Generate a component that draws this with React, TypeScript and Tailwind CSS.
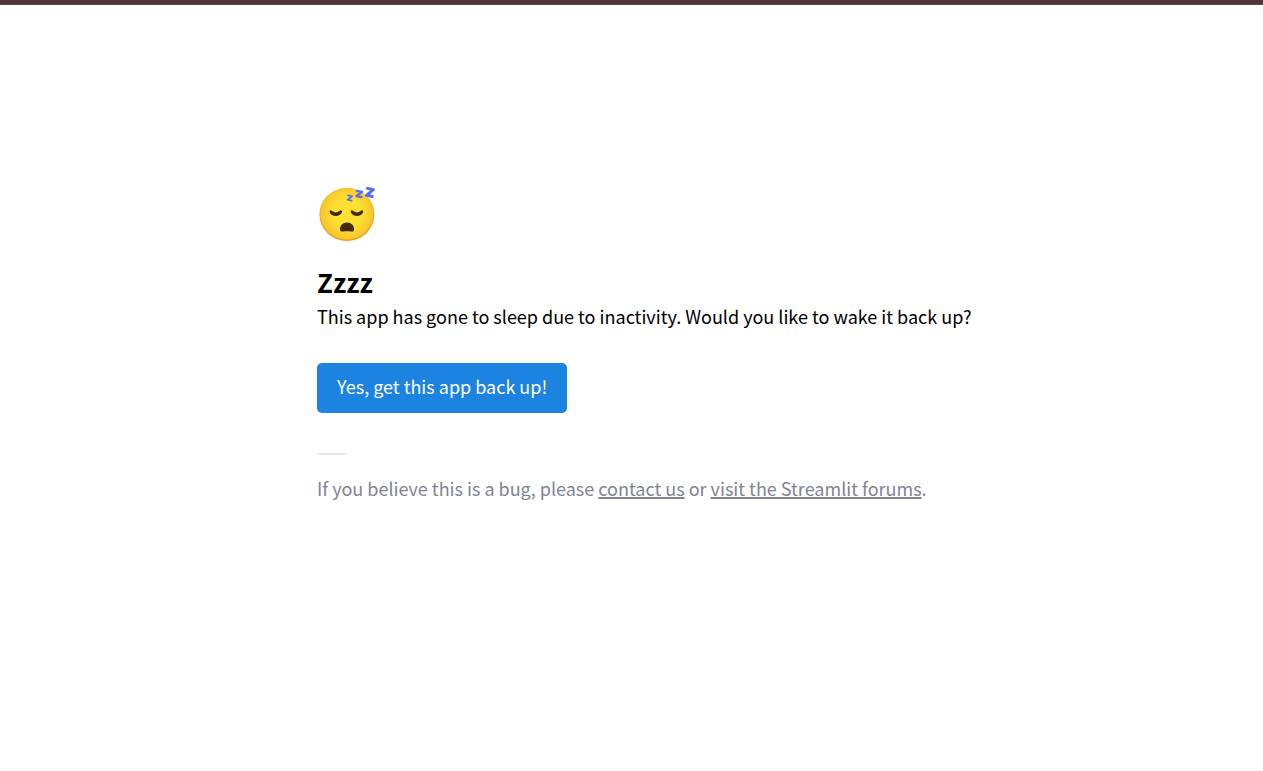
function SleepingFace() {
  return (
    <svg viewBox="0 0 60 60" className="size-15" role="img" aria-label="Sleeping face">
      <defs>
        <radialGradient id="face" cx="30" cy="29" r="28" gradientUnits="userSpaceOnUse">
          <stop offset="0.5" stopColor="#fde030" />
          <stop offset="0.92" stopColor="#f9c62c" />
          <stop offset="1" stopColor="#f4a223" />
        </radialGradient>
      </defs>
      <ellipse cx="29.9" cy="30.5" rx="27.4" ry="26.6" fill="#f09c1a" />
      <ellipse cx="29.7" cy="29.9" rx="26.9" ry="25.9" fill="url(#face)" />
      <g fill="#422b0d" stroke="#422b0d" strokeWidth="1.3" strokeLinejoin="round">
        <path d="M13.2 27.2c.5-.5 1-.1 1.6.4 2.7 2 5.2 2 7.9 0 .6-.5 1.1-.9 1.6-.4.4.6-.9 4.1-5.5 4.1s-6-3.5-5.6-4.1z" />
        <path d="M34.4 27.2c.5-.5 1-.1 1.6.4 2.7 2 5.2 2 7.9 0 .6-.5 1.1-.9 1.6-.4.4.6-.9 4.1-5.5 4.1s-6-3.5-5.6-4.1z" />
      </g>
      <path d="M30 38.6c-4.4 0-7 3.5-7 6.3 0 2.6 1.7 2.9 3.5 2.6 2.5-.4 4.6-.4 7.1 0 1.8.3 3.5 0 3.5-2.6 0-2.8-2.7-6.3-7.1-6.3z" fill="#422b0d" />
      <g fill="none" stroke="#536dfe" strokeLinejoin="round" strokeLinecap="round">
        <path d="M31 11.3l4.2 1-4.6 3.4 4 1" strokeWidth="1.8" />
        <path d="M39.9 6.9l5.1 1-5.5 4.1 4.9 1" strokeWidth="2.3" />
        <path d="M50.4 4.4l6 1.2-7 5.7 5.9 1.2" strokeWidth="3" />
      </g>
    </svg>
  );
}

export default function App() {
  return (
    <div className="min-h-screen bg-white font-['Noto_Sans_CJK_SC','Noto_Sans',sans-serif] text-lg text-black">
      <header className="h-[5px] border-b border-[#564448] bg-[#523339]" />
      <main className="flex flex-col items-start pt-[179px] pr-4 pl-[25.1%]">
        <SleepingFace />
        <h1 className="mt-[18px] text-[26px] leading-10 font-bold">Zzzz</h1>
        <p className="-mt-px leading-[30px]">
          This app has gone to sleep due to inactivity. Would you like to wake it back up?
        </p>
        <button
          type="button"
          className="mt-8 rounded-[5px] bg-[#1c83e1] px-5 pt-2 pb-3 leading-[30px] text-white"
        >
          Yes, get this app back up!
        </button>
        <hr className="mt-10 w-[30px] border-t-2 border-[#e6eaf1]" />
        <p className="mt-[18px] leading-[30px] text-[#808495]">
          If you believe this is a bug, please{" "}
          <a href="#contact" className="underline decoration-2 underline-offset-1">contact us</a> or{" "}
          <a href="#forums" className="underline decoration-2 underline-offset-1">visit the Streamlit forums</a>.
        </p>
      </main>
    </div>
  );
}
